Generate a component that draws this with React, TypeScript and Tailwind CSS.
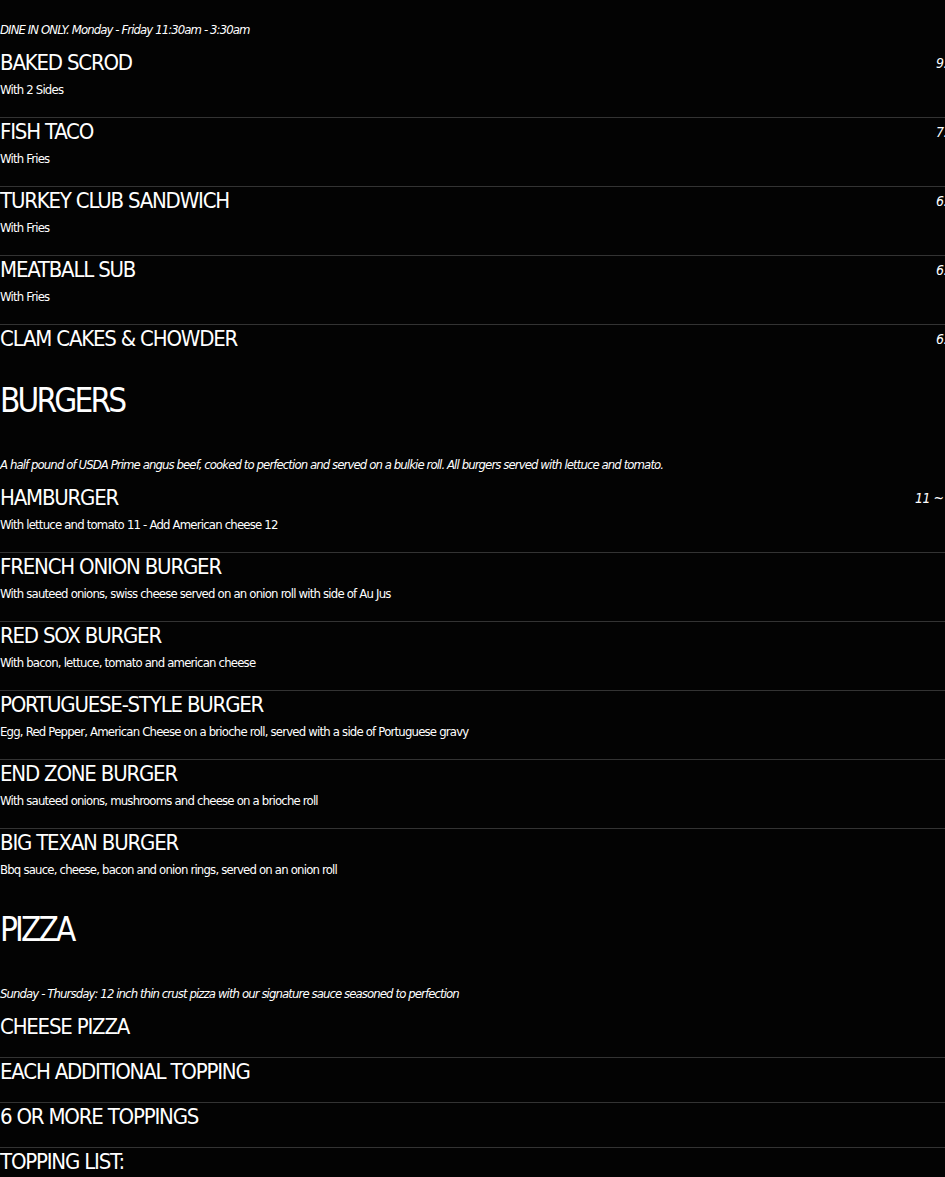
import React from 'react';

type Item = {
  name: string;
  desc?: string;
  price?: string;
};

type Section = {
  title?: string;
  note: string;
  items: Item[];
};

const sections: Section[] = [
  {
    note: 'DINE IN ONLY. Monday - Friday 11:30am - 3:30am',
    items: [
      { name: 'BAKED SCROD', desc: 'With 2 Sides', price: '9.95' },
      { name: 'FISH TACO', desc: 'With Fries', price: '7.95' },
      { name: 'TURKEY CLUB SANDWICH', desc: 'With Fries', price: '6.95' },
      { name: 'MEATBALL SUB', desc: 'With Fries', price: '6.95' },
      { name: 'CLAM CAKES & CHOWDER', price: '6.95' },
    ],
  },
  {
    title: 'BURGERS',
    note: 'A half pound of USDA Prime angus beef, cooked to perfection and served on a bulkie roll. All burgers served with lettuce and tomato.',
    items: [
      { name: 'HAMBURGER', desc: 'With lettuce and tomato 11 - Add American cheese 12', price: '11 ~ 12' },
      { name: 'FRENCH ONION BURGER', desc: 'With sauteed onions, swiss cheese served on an onion roll with side of Au Jus' },
      { name: 'RED SOX BURGER', desc: 'With bacon, lettuce, tomato and american cheese' },
      { name: 'PORTUGUESE-STYLE BURGER', desc: 'Egg, Red Pepper, American Cheese on a brioche roll, served with a side of Portuguese gravy' },
      { name: 'END ZONE BURGER', desc: 'With sauteed onions, mushrooms and cheese on a brioche roll' },
      { name: 'BIG TEXAN BURGER', desc: 'Bbq sauce, cheese, bacon and onion rings, served on an onion roll' },
    ],
  },
  {
    title: 'PIZZA',
    note: 'Sunday - Thursday: 12 inch thin crust pizza with our signature sauce seasoned to perfection',
    items: [
      { name: 'CHEESE PIZZA' },
      { name: 'EACH ADDITIONAL TOPPING' },
      { name: '6 OR MORE TOPPINGS' },
      { name: 'TOPPING LIST:' },
    ],
  },
];

const font = "font-['Liberation_Sans_Narrow','DejaVu_Sans',sans-serif] font-stretch-condensed";

const MenuRow: React.FC<{ item: Item; last: boolean }> = ({ item, last }) => {
  // rows without a description are shorter; the last row of a section has no divider
  let pad = item.desc ? 'pb-[17px]' : 'pb-[16px]';
  if (last) pad = item.desc ? 'pb-[19px]' : 'pb-[17px]';
  return (
    <div className={`flex justify-between ${pad} ${last ? '' : 'border-b border-[#333]'}`}>
      <div>
        <p className="text-[22px] leading-[28px] tracking-[-1.2px] text-white">{item.name}</p>
        {item.desc && <p className="mt-[3px] text-[13px] leading-[20px] tracking-[-0.8px] text-white">{item.desc}</p>}
      </div>
      {item.price && <p className="text-[14px] leading-[28px] italic tracking-[-0.5px] text-white">{item.price}</p>}
    </div>
  );
};

export default function App() {
  return (
    <div className={`w-full min-h-screen overflow-hidden bg-[#030303] ${font}`}>
      <div className="w-[962px] pt-[20px]">
        {sections.map((s, i) => (
          <section key={i} className="mb-[9px]">
            {s.title && (
              <h2 className="text-[33px] leading-[44px] tracking-[-2.8px] text-white">{s.title}</h2>
            )}
            <p className={`${s.title ? 'mt-[32px]' : ''} text-[13px] leading-[20px] italic tracking-[-0.9px] text-white`}>
              {s.note}
            </p>
            <div className="mt-[9px]">
              {s.items.map((it, j) => (
                <MenuRow key={j} item={it} last={j === s.items.length - 1} />
              ))}
            </div>
          </section>
        ))}
      </div>
    </div>
  );
}
